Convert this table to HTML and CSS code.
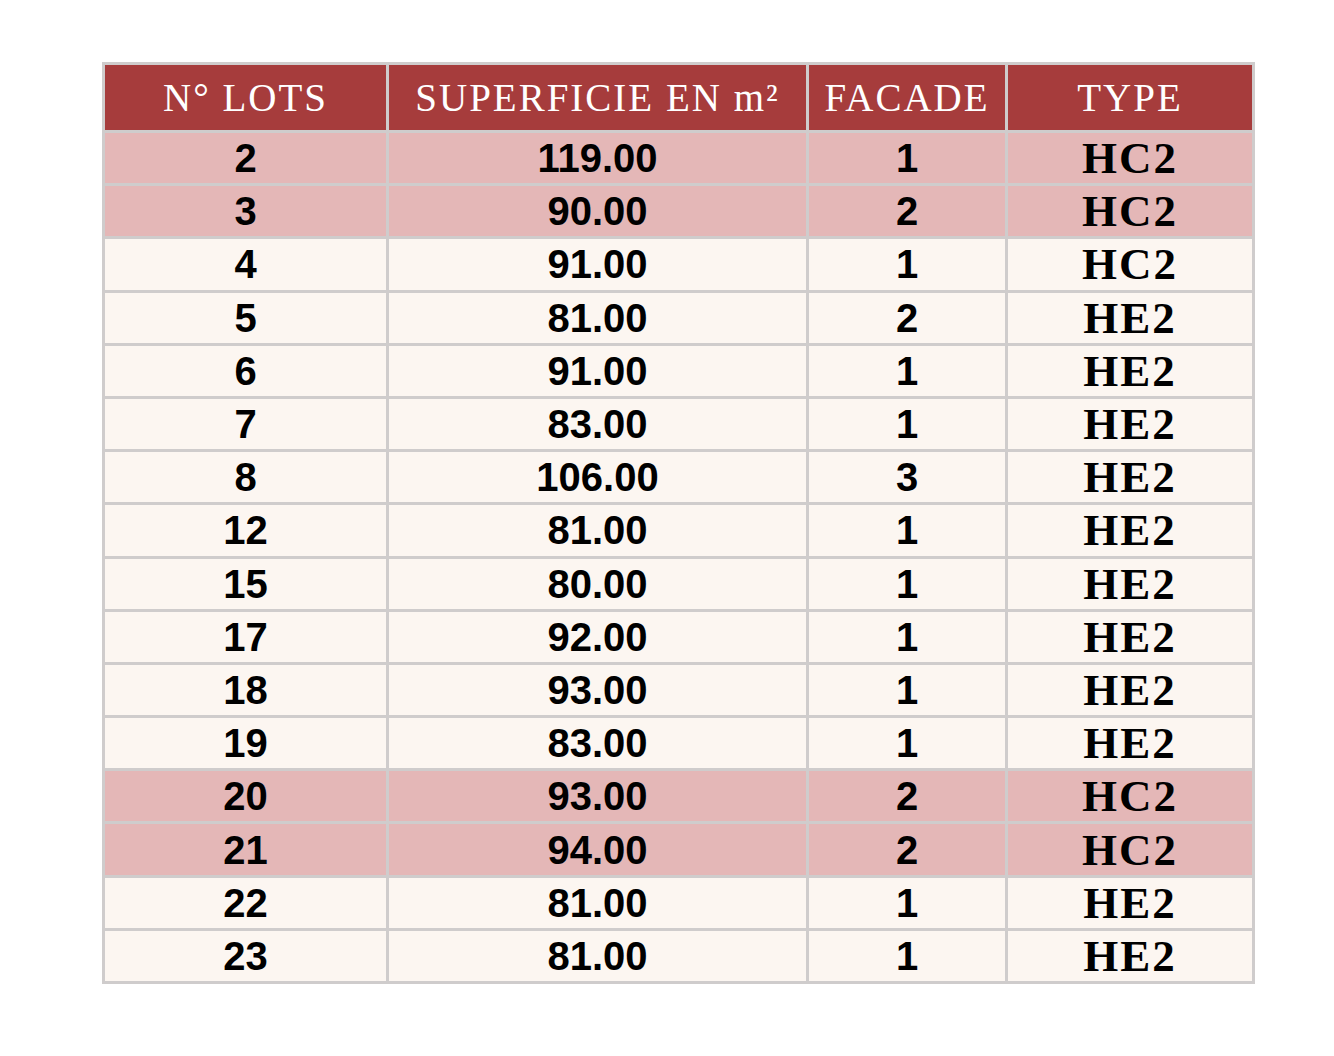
FILE: index.html
```html
<!DOCTYPE html>
<html lang="fr">
<head>
<meta charset="utf-8">
<title>Lots</title>
<link rel="stylesheet" href="styles.css">
</head>
<body>
<table class="lots">
  <thead>
    <tr>
      <th class="c1">N° LOTS</th>
      <th class="c2">SUPERFICIE EN m²</th>
      <th class="c3">FACADE</th>
      <th class="c4">TYPE</th>
    </tr>
  </thead>
  <tbody>
    <tr class="hl"><td>2</td><td>119.00</td><td>1</td><td class="type">HC2</td></tr>
    <tr class="hl"><td>3</td><td>90.00</td><td>2</td><td class="type">HC2</td></tr>
    <tr><td>4</td><td>91.00</td><td>1</td><td class="type">HC2</td></tr>
    <tr><td>5</td><td>81.00</td><td>2</td><td class="type">HE2</td></tr>
    <tr><td>6</td><td>91.00</td><td>1</td><td class="type">HE2</td></tr>
    <tr><td>7</td><td>83.00</td><td>1</td><td class="type">HE2</td></tr>
    <tr><td>8</td><td>106.00</td><td>3</td><td class="type">HE2</td></tr>
    <tr><td>12</td><td>81.00</td><td>1</td><td class="type">HE2</td></tr>
    <tr><td>15</td><td>80.00</td><td>1</td><td class="type">HE2</td></tr>
    <tr><td>17</td><td>92.00</td><td>1</td><td class="type">HE2</td></tr>
    <tr><td>18</td><td>93.00</td><td>1</td><td class="type">HE2</td></tr>
    <tr><td>19</td><td>83.00</td><td>1</td><td class="type">HE2</td></tr>
    <tr class="hl"><td>20</td><td>93.00</td><td>2</td><td class="type">HC2</td></tr>
    <tr class="hl"><td>21</td><td>94.00</td><td>2</td><td class="type">HC2</td></tr>
    <tr><td>22</td><td>81.00</td><td>1</td><td class="type">HE2</td></tr>
    <tr><td>23</td><td>81.00</td><td>1</td><td class="type">HE2</td></tr>
  </tbody>
</table>
</body>
</html>
```
FILE: styles.css
```css
html, body {
  margin: 0;
  padding: 0;
  background: #ffffff;
}
body {
  padding: 62px 0 0 102px;
}
.lots {
  border-collapse: separate;
  border-spacing: 3px;
  background: #cfcccc;
  table-layout: fixed;
  width: 1153px;
}
.lots th, .lots td {
  padding: 0;
  text-align: center;
  vertical-align: middle;
}
.lots th {
  background: #a63c3c;
  color: #ffffff;
  font-family: "Liberation Serif", "Times New Roman", serif;
  font-weight: normal;
  font-size: 39px;
  letter-spacing: 2px;
  height: 65px;
  line-height: 62px;
}
.c1 { width: 281px; }
.c2 { width: 417px; }
.c3 { width: 196px; }
.c4 { width: 244px; }
.lots td {
  background: #fcf6f1;
  color: #000000;
  font-family: "Liberation Sans", Arial, sans-serif;
  font-weight: bold;
  font-size: 40px;
  height: 50.2px;
  line-height: 50px;
}
.lots tr.hl td {
  background: #e4b7b7;
}
.lots td.type {
  font-family: "Liberation Serif", "Times New Roman", serif;
  font-size: 45px;
  letter-spacing: 2px;
}
```
